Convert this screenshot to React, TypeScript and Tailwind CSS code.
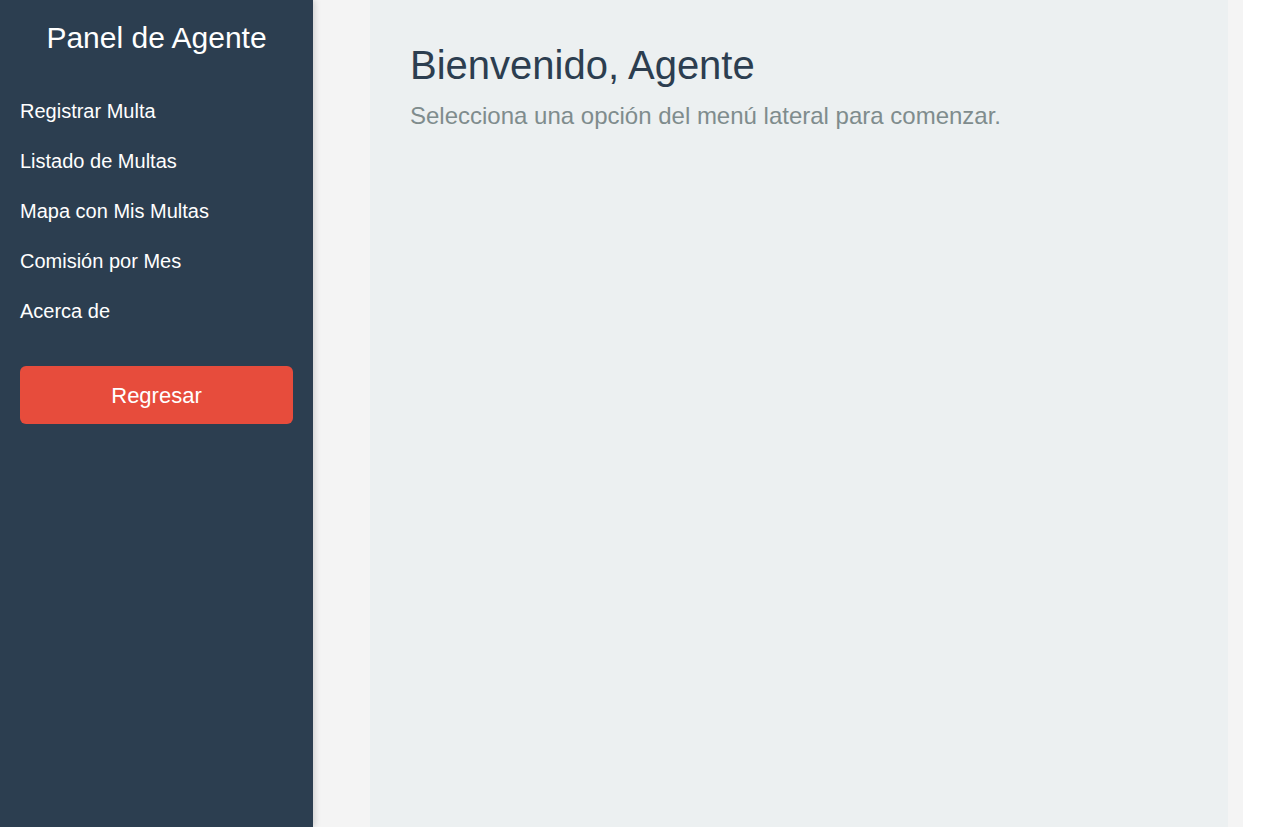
import * as React from 'react';

const menuItems = [
    'Registrar Multa',
    'Listado de Multas',
    'Mapa con Mis Multas',
    'Comisión por Mes',
    'Acerca de',
];

function Sidebar() {
    return (
        <aside className="w-[313px] shrink-0 h-full bg-[#2c3e50] text-white px-[20px] pt-[21px] shadow-[2px_0_6px_rgba(0,0,0,0.15)] relative z-10">
            <h2 className="text-[30px] leading-[34px] text-center font-normal">Panel de Agente</h2>
            <nav className="mt-[31px] flex flex-col">
                {menuItems.map((item) => (
                    <a key={item} href="#" className="h-[50px] flex items-center text-[20px] text-white">
                        {item}
                    </a>
                ))}
            </nav>
            <button className="mt-[30px] w-full h-[58px] rounded-[6px] bg-[#e74c3c] text-white text-[22px]">
                Regresar
            </button>
        </aside>
    );
}

export default function App() {
    return (
        <div className="flex h-screen w-full bg-white overflow-hidden" style={{ fontFamily: '"Liberation Sans", Arial, sans-serif' }}>
            <Sidebar />
            <main className="w-[930px] h-full bg-[#f4f4f4]">
                <div className="ml-[57px] w-[858px] h-full bg-[#ecf0f1] px-[40px] pt-[42px]">
                    <h1 className="text-[40px] leading-[46px] text-[#2c3e50] font-normal">Bienvenido, Agente</h1>
                    <p className="mt-[14px] text-[24px] leading-[28px] text-[#7f8c8d]">
                        Selecciona una opción del menú lateral para comenzar.
                    </p>
                </div>
            </main>
        </div>
    );
}
